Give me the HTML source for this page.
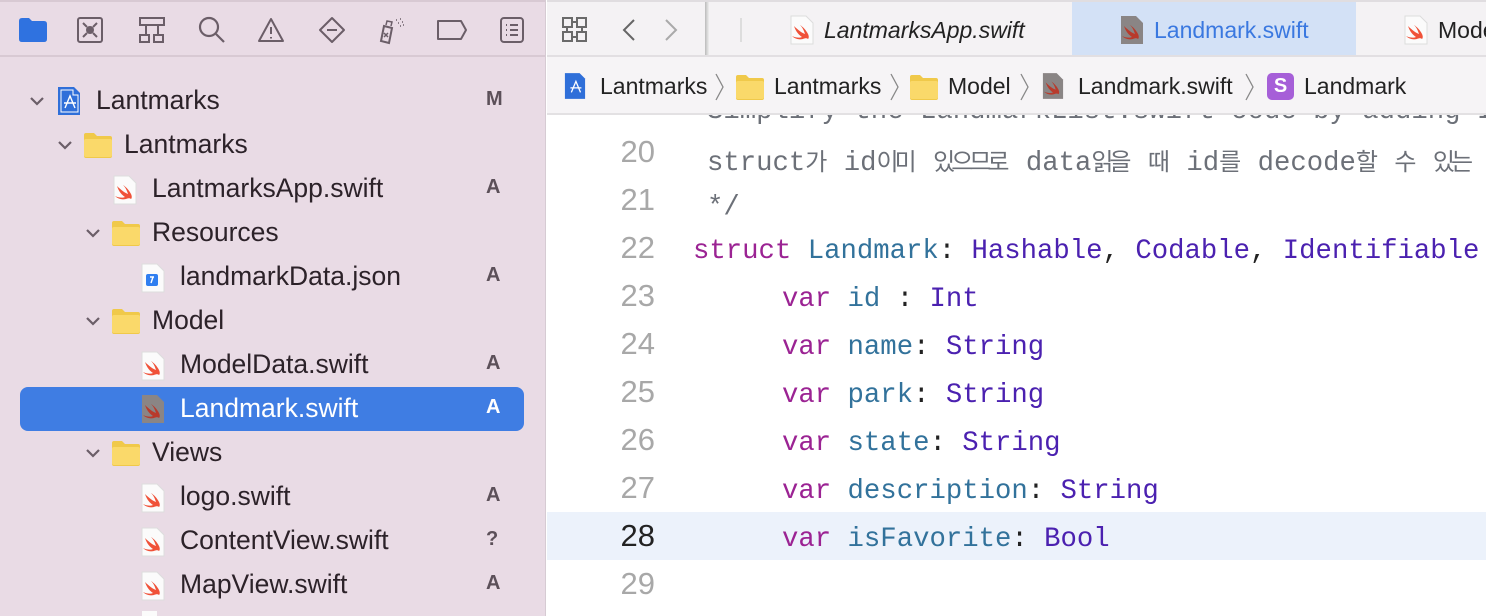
<!DOCTYPE html>
<html><head><meta charset="utf-8"><style>
*{margin:0;padding:0;box-sizing:border-box}
body{width:1486px;height:616px;overflow:hidden;position:relative;background:#fff;font-family:"Liberation Sans","Noto Sans CJK KR",sans-serif}
.sb{position:absolute;left:0;top:0;width:546px;height:616px;background:#e9dbe5;border-right:1px solid #d6cbd3;overflow:hidden}
.tb{position:absolute;left:0;top:0;width:546px;height:57px;border-bottom:2px solid #d8c9d3;border-top:2px solid #d8c9d3}
.ic{position:absolute;top:14px}
.row{position:absolute;left:0;width:546px;height:44px;font-size:26.5px;color:#2c2229}
.row .t{position:absolute;top:6px}
.row .b{position:absolute;left:486px;top:9px;font-size:20px;font-weight:bold;color:#5c5059}
.chev{position:absolute;top:13px}
.sel{position:absolute;left:20px;top:387px;width:504px;height:44px;background:#3f7de3;border-radius:8px}
.ed{position:absolute;left:547px;top:0;width:939px;height:616px;background:#fff;overflow:hidden}
.tabs{position:absolute;left:0;top:0;width:939px;height:57px;background:#f4f2f4;border-top:2px solid #e0dde0;border-bottom:2px solid #e2dfe2;overflow:hidden}
.bc{position:absolute;left:0;top:57px;width:939px;height:58px;background:#f6f4f6;border-bottom:2px solid #e3e1e3;font-size:23px;color:#222;z-index:2}
.bc span{position:absolute;top:16px}
.code{position:absolute;left:0;top:0;width:939px;height:616px;font-family:"Liberation Mono","Noto Sans CJK KR",monospace;font-size:27.3px}
.ln{position:absolute;width:108px;text-align:right;font-family:"Liberation Sans",sans-serif;font-size:31px;color:#a8a8a8;left:0}
.cl{position:absolute;white-space:pre}
.k{color:#9b2393}.n{color:#32729b}.ty{color:#4b21b0}.p{color:#222}.c{color:#6c7078}
.ko{font-family:"Noto Sans CJK KR",sans-serif;font-size:24px;letter-spacing:-4px;padding-right:4px}
</style></head><body>
<svg width="0" height="0" style="position:absolute"><defs>
<symbol id="sw" viewBox="0 0 24 30"><path d="M1 1h15l7 7v21H1z" fill="#fbfbfb" stroke="#ddd"/><path d="M4 11c4 4 8 7 11 8-1-3-2-6-5-9 3 2 6 5 8 9 1 2 1 4 0 5-1-1-3-1-5 0-4 1-8 0-11-3 4 2 8 2 10 1-3-2-6-5-8-11z" fill="#f05138"/></symbol>
<symbol id="swg" viewBox="0 0 24 30"><path d="M1 1h15l7 7v21H1z" fill="#8a8585"/><path d="M4 11c4 4 8 7 11 8-1-3-2-6-5-9 3 2 6 5 8 9 1 2 1 4 0 5-1-1-3-1-5 0-4 1-8 0-11-3 4 2 8 2 10 1-3-2-6-5-8-11z" fill="#b83a2c"/></symbol>
<symbol id="fd" viewBox="0 0 30 26"><path d="M1 3q0-2 2-2h8l3 3h13q2 0 2 2v18q0 2-2 2H3q-2 0-2-2z" fill="#f0c94a"/><rect x="1" y="7" width="28" height="18" rx="2" fill="#fad96a"/></symbol>
<symbol id="ch" viewBox="0 0 18 18"><path d="M3 6l6 6 6-6" fill="none" stroke="#6b5e68" stroke-width="2.2"/></symbol>
</defs></svg>
<div class="sb">
 <div class="tb">
  <svg class="ic" style="left:18px" width="30" height="28" viewBox="0 0 30 28"><path d="M1 5q0-3 3-3h7l3 3h12q3 0 3 3v15q0 3-3 3H4q-3 0-3-3z" fill="#2f72e0"/></svg>
  <svg class="ic" style="left:76px" width="28" height="28" viewBox="0 0 28 28" fill="none" stroke="#6b5e68" stroke-width="2"><rect x="2" y="2" width="24" height="24" rx="2"/><circle cx="14" cy="14" r="3" fill="#6b5e68"/><path d="M7 7l4 4M21 7l-4 4M7 21l4-4M21 21l-4-4"/></svg>
  <svg class="ic" style="left:138px" width="28" height="28" viewBox="0 0 28 28" fill="none" stroke="#6b5e68" stroke-width="2"><rect x="2" y="2" width="24" height="7"/><path d="M8 9v10M20 9v10"/><rect x="2" y="19" width="9" height="7"/><rect x="16" y="19" width="9" height="7"/></svg>
  <svg class="ic" style="left:198px" width="28" height="28" viewBox="0 0 28 28" fill="none" stroke="#6b5e68" stroke-width="2.2"><circle cx="11" cy="11" r="9"/><path d="M18 18l8 8"/></svg>
  <svg class="ic" style="left:257px" width="28" height="28" viewBox="0 0 28 28" fill="none" stroke="#6b5e68" stroke-width="2"><path d="M14 3L2 25h24z" stroke-linejoin="round"/><path d="M14 11v7M14 21v1.5"/></svg>
  <svg class="ic" style="left:317px" width="30" height="28" viewBox="0 0 30 28" fill="none" stroke="#6b5e68" stroke-width="2"><path d="M15 2l12 12-12 12L3 14z" stroke-linejoin="round"/><path d="M10 14h10"/></svg>
  <svg class="ic" style="left:376px" width="32" height="30" viewBox="0 0 32 30" fill="none" stroke="#6b5e68" stroke-width="2"><path d="M8 10l8 2-3 15-8-2z"/><path d="M10 9l1-4 5 1-1 4M8 17l4 4M12 17l-4 4" stroke-width="1.5"/><path d="M20 4h1M24 3h1M22 7h1M26 6h1M24 10h1M27 9h1" stroke-width="1.5"/></svg>
  <svg class="ic" style="left:436px;top:17px" width="32" height="22" viewBox="0 0 32 22" fill="none" stroke="#6b5e68" stroke-width="2"><path d="M2 2h23l5 9-5 9H2z" stroke-linejoin="round"/></svg>
  <svg class="ic" style="left:499px" width="26" height="28" viewBox="0 0 26 28" fill="none" stroke="#6b5e68" stroke-width="2"><rect x="2" y="2" width="22" height="24" rx="3"/><path d="M7 9h1M11 9h8M7 14h1M11 14h8M7 19h1M11 19h8"/></svg>
 </div>
 <div class="sel"></div>

 <div class="row" style="top:79px"><svg class="chev" style="left:28px" width="18" height="18"><use href="#ch"/></svg>
  <svg style="position:absolute;left:57px;top:7px" width="24" height="30" viewBox="0 0 24 30"><path d="M1 1h16l6 6v22H1z" fill="#2f6fd9"/><path d="M4 4h12v5h5v17H4z" fill="none" stroke="#fff" stroke-width="1"/><path d="M8 22l5-12 5 12M7 17h12" stroke="#fff" stroke-width="1.4" fill="none"/></svg>
  <span class="t" style="left:96px">Lantmarks</span><span class="b">M</span></div>

 <div class="row" style="top:123px"><svg class="chev" style="left:56px" width="18" height="18"><use href="#ch"/></svg>
  <svg style="position:absolute;left:83px;top:9px" width="30" height="26"><use href="#fd"/></svg>
  <span class="t" style="left:124px">Lantmarks</span></div>

 <div class="row" style="top:167px"><svg style="position:absolute;left:113px;top:8px" width="24" height="30"><use href="#sw"/></svg>
  <span class="t" style="left:152px">LantmarksApp.swift</span><span class="b">A</span></div>

 <div class="row" style="top:211px"><svg class="chev" style="left:84px" width="18" height="18"><use href="#ch"/></svg>
  <svg style="position:absolute;left:111px;top:9px" width="30" height="26"><use href="#fd"/></svg>
  <span class="t" style="left:152px">Resources</span></div>

 <div class="row" style="top:255px"><svg style="position:absolute;left:141px;top:8px" width="24" height="30" viewBox="0 0 24 30"><path d="M1 1h15l7 7v21H1z" fill="#fbfbfb" stroke="#ddd"/><rect x="5" y="11" width="12" height="12" rx="2" fill="#2f7ef0"/><path d="M10 20l2-6M9 14h4" stroke="#fff" stroke-width="1.4"/></svg>
  <span class="t" style="left:180px">landmarkData.json</span><span class="b">A</span></div>

 <div class="row" style="top:299px"><svg class="chev" style="left:84px" width="18" height="18"><use href="#ch"/></svg>
  <svg style="position:absolute;left:111px;top:9px" width="30" height="26"><use href="#fd"/></svg>
  <span class="t" style="left:152px">Model</span></div>

 <div class="row" style="top:343px"><svg style="position:absolute;left:141px;top:8px" width="24" height="30"><use href="#sw"/></svg>
  <span class="t" style="left:180px">ModelData.swift</span><span class="b">A</span></div>

 <div class="row" style="top:387px;color:#fff"><svg style="position:absolute;left:141px;top:7px" width="24" height="30"><use href="#swg"/></svg>
  <span class="t" style="left:180px">Landmark.swift</span><span class="b" style="color:#fff">A</span></div>

 <div class="row" style="top:431px"><svg class="chev" style="left:84px" width="18" height="18"><use href="#ch"/></svg>
  <svg style="position:absolute;left:111px;top:9px" width="30" height="26"><use href="#fd"/></svg>
  <span class="t" style="left:152px">Views</span></div>

 <div class="row" style="top:475px"><svg style="position:absolute;left:141px;top:8px" width="24" height="30"><use href="#sw"/></svg>
  <span class="t" style="left:180px">logo.swift</span><span class="b">A</span></div>
 <div class="row" style="top:519px"><svg style="position:absolute;left:141px;top:8px" width="24" height="30"><use href="#sw"/></svg>
  <span class="t" style="left:180px">ContentView.swift</span><span class="b">?</span></div>
 <div class="row" style="top:563px"><svg style="position:absolute;left:141px;top:8px" width="24" height="30"><use href="#sw"/></svg>
  <span class="t" style="left:180px">MapView.swift</span><span class="b">A</span></div>
 <svg style="position:absolute;left:141px;top:610px" width="24" height="8"><path d="M1 1h15v7H1z" fill="#fbfbfb"/></svg>
</div>

<div class="ed">
 <div class="code">
  <div style="position:absolute;left:0;top:512px;width:939px;height:48px;background:#ecf2fb"></div>
  <div class="ln" style="top:134px">20</div>
  <div class="ln" style="top:182px">21</div>
  <div class="ln" style="top:230px">22</div>
  <div class="ln" style="top:278px">23</div>
  <div class="ln" style="top:326px">24</div>
  <div class="ln" style="top:374px">25</div>
  <div class="ln" style="top:422px">26</div>
  <div class="ln" style="top:470px">27</div>
  <div class="ln" style="top:518px;color:#222">28</div>
  <div class="ln" style="top:566px">29</div>
  <div class="cl c" style="left:160px;top:96px">Simplify the LandmarkList.swift code by adding Identifiable</div>
  <div class="cl c" style="left:160px;top:142px">struct<span class="ko">가</span> id<span class="ko">이미</span> <span class="ko">있으므로</span> data<span class="ko">읽을</span> <span class="ko">때</span> id<span class="ko">를</span> decode<span class="ko">할</span> <span class="ko">수</span> <span class="ko">있는</span> protocol</div>
  <div class="cl c" style="left:160px;top:192px">*/</div>
  <div class="cl" style="left:146px;top:236px"><span class="k">struct</span> <span class="n">Landmark</span><span class="p">:</span> <span class="ty">Hashable</span><span class="p">,</span> <span class="ty">Codable</span><span class="p">,</span> <span class="ty">Identifiable</span> <span class="p">{</span></div>
  <div class="cl" style="left:235px;top:284px"><span class="k">var</span> <span class="n">id</span> <span class="p">:</span> <span class="ty">Int</span></div>
  <div class="cl" style="left:235px;top:332px"><span class="k">var</span> <span class="n">name</span><span class="p">:</span> <span class="ty">String</span></div>
  <div class="cl" style="left:235px;top:380px"><span class="k">var</span> <span class="n">park</span><span class="p">:</span> <span class="ty">String</span></div>
  <div class="cl" style="left:235px;top:428px"><span class="k">var</span> <span class="n">state</span><span class="p">:</span> <span class="ty">String</span></div>
  <div class="cl" style="left:235px;top:476px"><span class="k">var</span> <span class="n">description</span><span class="p">:</span> <span class="ty">String</span></div>
  <div class="cl" style="left:235px;top:524px"><span class="k">var</span> <span class="n">isFavorite</span><span class="p">:</span> <span class="ty">Bool</span></div>
 </div>
 <div class="tabs">
  <svg style="position:absolute;left:15px;top:15px" width="26" height="26" viewBox="0 0 26 26" fill="none" stroke="#6a6a6a" stroke-width="2"><rect x="1" y="1" width="9" height="9"/><rect x="15" y="1" width="9" height="9"/><rect x="1" y="15" width="9" height="9"/><rect x="15" y="15" width="9" height="9"/><path d="M10 5h5M20 10v5M5 10v5M10 20h5"/></svg>
  <svg style="position:absolute;left:74px;top:16px" width="16" height="24" viewBox="0 0 16 24" fill="none" stroke="#666" stroke-width="2"><path d="M13 2L3 12l10 10"/></svg>
  <svg style="position:absolute;left:116px;top:16px" width="16" height="24" viewBox="0 0 16 24" fill="none" stroke="#aaa" stroke-width="2"><path d="M3 2l10 10-10 10"/></svg>
  <div style="position:absolute;left:158px;top:0;width:4px;height:55px;background:linear-gradient(90deg,#bbb,#eee)"></div>
  <div style="position:absolute;left:193px;top:16px;width:2px;height:24px;background:#ddd"></div>
  <svg style="position:absolute;left:243px;top:13px" width="24" height="30"><use href="#sw"/></svg>
  <span style="position:absolute;left:277px;top:15px;font-size:23px;font-style:italic;color:#222">LantmarksApp.swift</span>
  <div style="position:absolute;left:525px;top:0;width:284px;height:55px;background:#d3e1f6"></div>
  <svg style="position:absolute;left:573px;top:13px" width="24" height="30"><use href="#swg"/></svg>
  <span style="position:absolute;left:607px;top:15px;font-size:23px;color:#3a78e0">Landmark.swift</span>
  <svg style="position:absolute;left:857px;top:13px" width="24" height="30"><use href="#sw"/></svg>
  <span style="position:absolute;left:891px;top:15px;font-size:23px;color:#222">Model</span>
 </div>
 <div class="bc">
  <svg style="position:absolute;left:17px;top:14px" width="22" height="30" viewBox="0 0 24 30"><path d="M1 1h16l6 6v22H1z" fill="#2f6fd9"/><path d="M8 22l5-12 5 12M7 17h12" stroke="#fff" stroke-width="1.4" fill="none"/></svg>
  <span style="left:53px">Lantmarks</span>
  <svg style="position:absolute;left:168px;top:16px" width="10" height="28" viewBox="0 0 10 28" fill="none" stroke="#888" stroke-width="1.3"><path d="M1 1l7 13-7 13"/></svg>
  <svg style="position:absolute;left:188px;top:17px" width="30" height="26"><use href="#fd"/></svg>
  <span style="left:227px">Lantmarks</span>
  <svg style="position:absolute;left:343px;top:16px" width="10" height="28" viewBox="0 0 10 28" fill="none" stroke="#888" stroke-width="1.3"><path d="M1 1l7 13-7 13"/></svg>
  <svg style="position:absolute;left:362px;top:17px" width="30" height="26"><use href="#fd"/></svg>
  <span style="left:401px">Model</span>
  <svg style="position:absolute;left:473px;top:16px" width="10" height="28" viewBox="0 0 10 28" fill="none" stroke="#888" stroke-width="1.3"><path d="M1 1l7 13-7 13"/></svg>
  <svg style="position:absolute;left:495px;top:14px" width="22" height="30" viewBox="0 0 24 30"><use href="#swg"/></svg>
  <span style="left:531px">Landmark.swift</span>
  <svg style="position:absolute;left:698px;top:16px" width="10" height="28" viewBox="0 0 10 28" fill="none" stroke="#888" stroke-width="1.3"><path d="M1 1l7 13-7 13"/></svg>
  <div style="position:absolute;left:720px;top:16px;width:27px;height:27px;border-radius:5px;background:#a65fd8;color:#fff;font-weight:bold;font-size:20px;text-align:center;line-height:27px">S</div>
  <span style="left:757px">Landmark</span>
 </div>
</div>
</body></html>
